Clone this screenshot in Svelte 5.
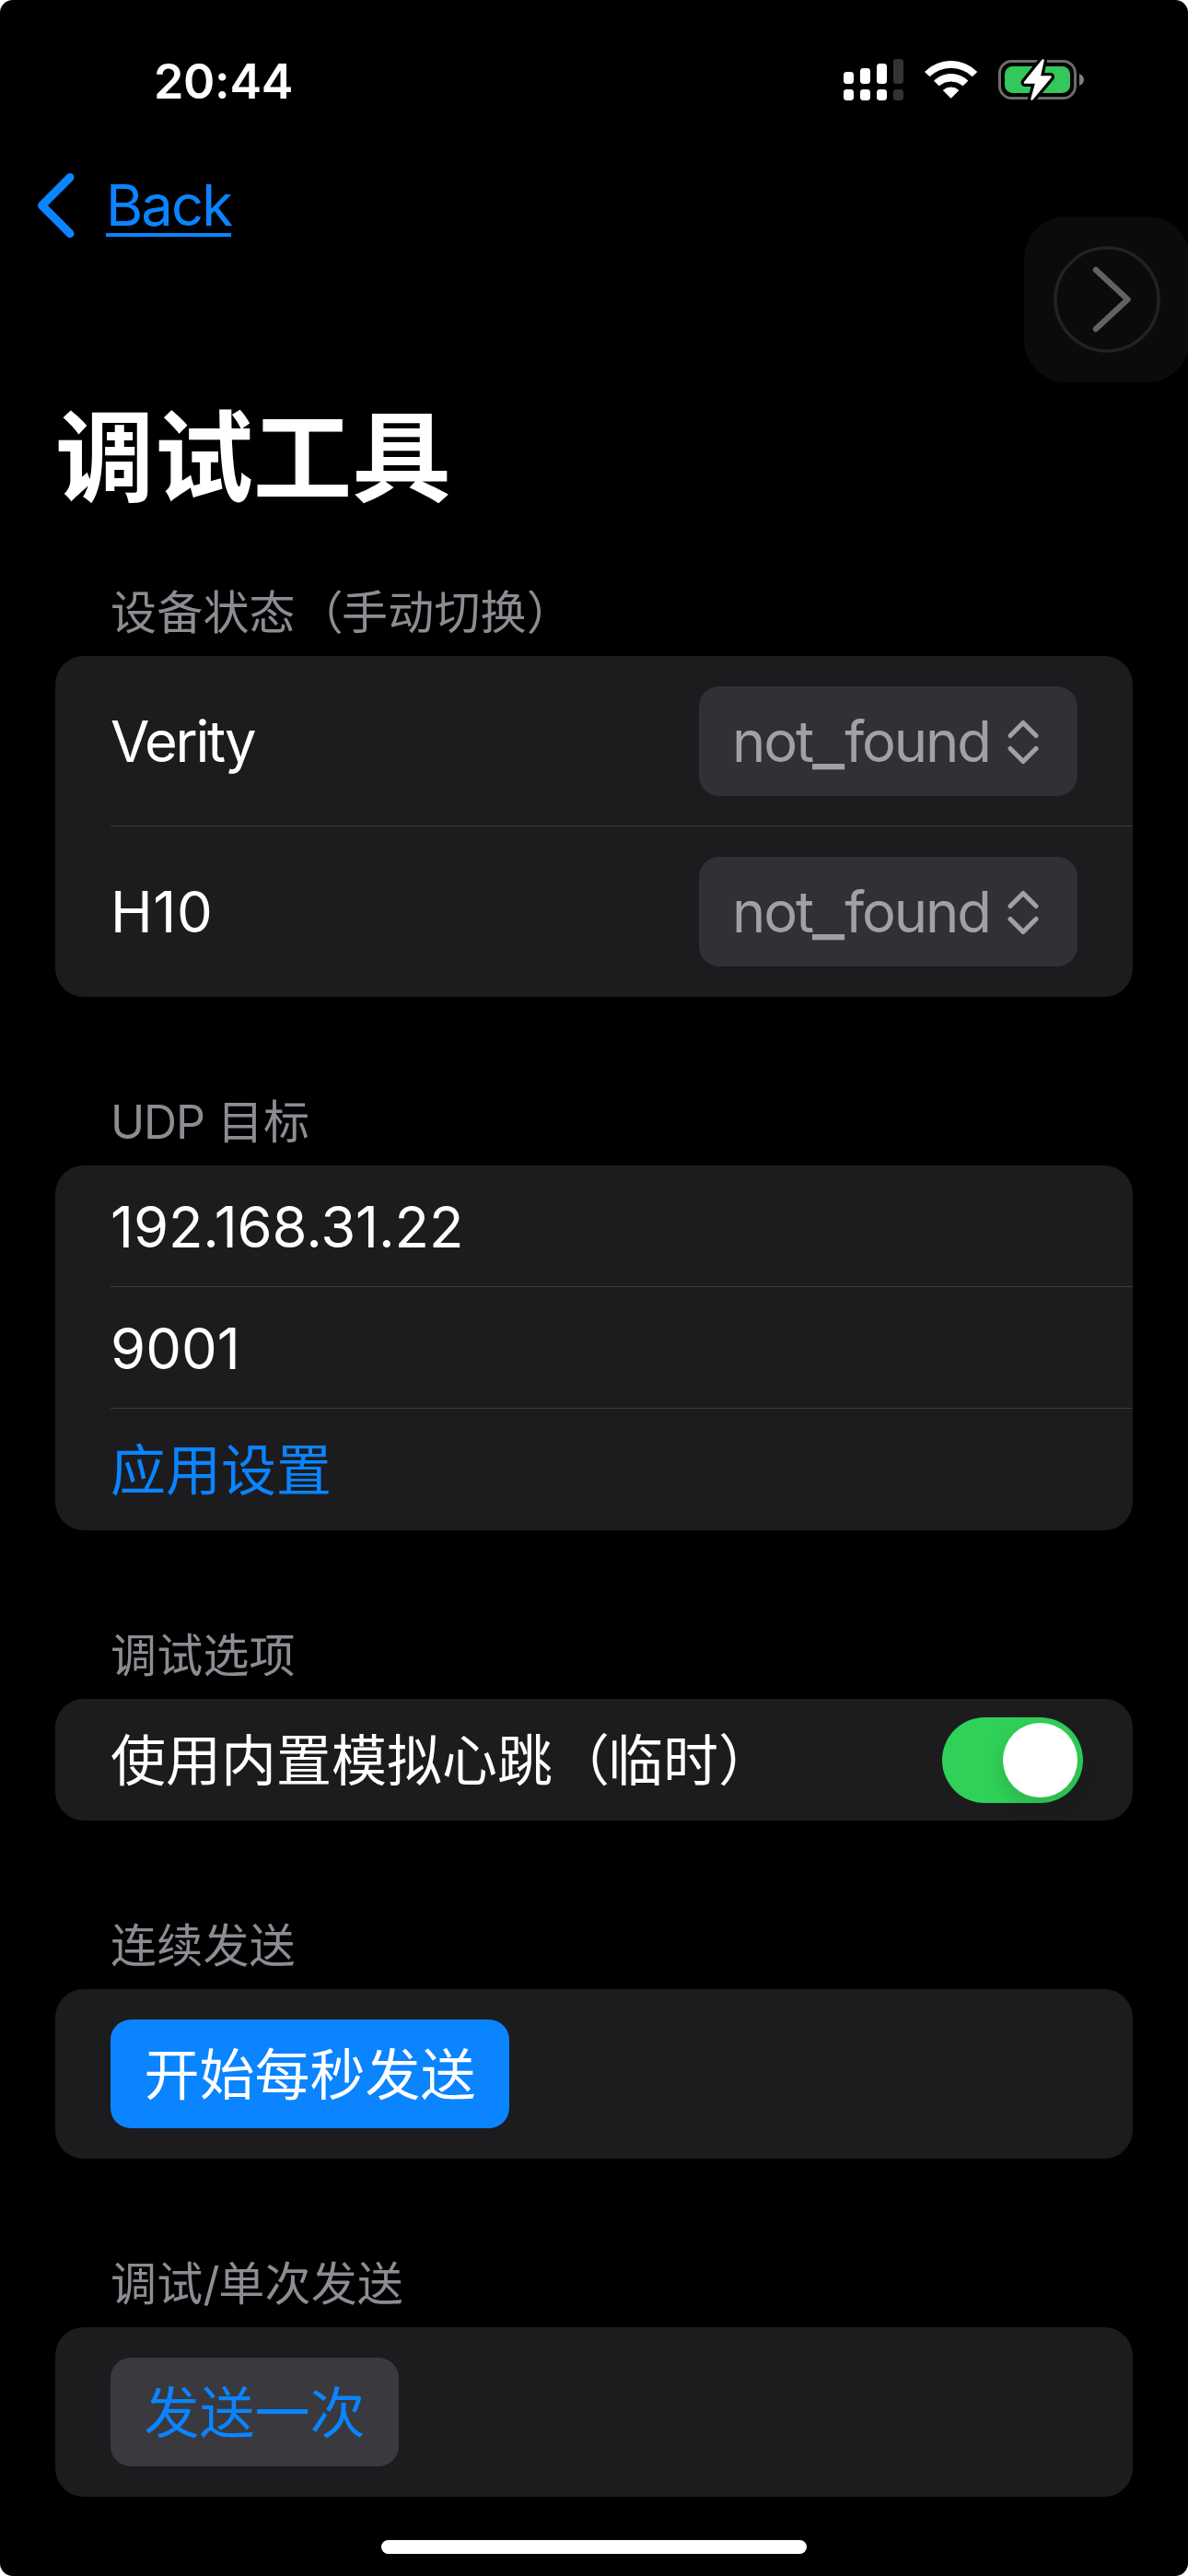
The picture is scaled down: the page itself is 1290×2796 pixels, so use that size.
<script>
  const devices = [
    { name: 'Verity', tight: true },
    { name: 'H10', tight: false }
  ];
  let simulate = $state(true);
</script>

<div class="screen">
  <div class="status">
    <span class="time">20:44</span>
    <svg class="status-icons" width="262" height="46" viewBox="916 64 262 46">
      <g fill="#fff">
        <rect x="916" y="78" width="11" height="13" rx="3.4" />
        <rect x="934" y="74" width="11" height="17" rx="3.4" />
        <rect x="952" y="69" width="11" height="22" rx="3.4" />
        <rect x="916" y="97" width="11" height="12" rx="3.4" />
        <rect x="934" y="97" width="11" height="12" rx="3.4" />
        <rect x="952" y="97" width="11" height="12" rx="3.4" />
      </g>
      <g fill="#333">
        <rect x="970" y="64" width="11" height="27" rx="3.4" />
        <rect x="970" y="97" width="11" height="12" rx="3.4" />
      </g>
      <g fill="#fff" stroke="#fff" stroke-width="1" stroke-linejoin="round">
        <path d="M1004.5 78A40 40 0 0 1 1060.7 78L1055.7 82.7A33.3 33.3 0 0 0 1009.5 82.7Z" />
        <path d="M1014.5 87.7A26.5 26.5 0 0 1 1050.8 87.7L1045.6 92.8A20 20 0 0 0 1019.6 92.8Z" />
        <path d="M1024.4 98A12.5 12.5 0 0 1 1040.8 98L1032.6 106.3Z" />
      </g>
      <rect x="1085.5" y="66.5" width="82" height="40" rx="13" fill="none" stroke="#6c6c6c" stroke-width="3" />
      <path d="M1172 80Q1177 82 1177 86.5Q1177 91 1172 93Z" fill="#7c7c7c" />
      <rect x="1091" y="72" width="71" height="29" rx="8.5" fill="#34c759" />
      <path d="M1132.5 65.5L1113 89.5H1125.5L1120.5 107.5L1140.5 83.5H1128.5Z" fill="#fff" stroke="#000" stroke-width="9" stroke-linejoin="round" />
      <path d="M1132.5 65.5L1113 89.5H1125.5L1120.5 107.5L1140.5 83.5H1128.5Z" fill="#fff" stroke="#fff" stroke-width="2.6" stroke-linejoin="round" />
    </svg>
  </div>

  <nav class="nav">
    <svg width="42" height="72" viewBox="0 0 42 72">
      <path d="M36 5.5L5.5 36L36 66.5" fill="none" stroke="#0a84ff" stroke-width="9" stroke-linecap="round" stroke-linejoin="round" />
    </svg>
    <span class="back">Back</span>
  </nav>

  <div class="assist">
    <svg width="180" height="180" viewBox="0 0 180 180">
      <circle cx="90" cy="90" r="56" fill="none" stroke="#222" stroke-width="3.6" />
      <path d="M78 58L112.5 90L78 122" fill="none" stroke="#626262" stroke-width="6.4" stroke-linecap="round" stroke-linejoin="round" />
    </svg>
  </div>

  <h1>调试工具</h1>

  <h2 class="first">设备状态<span class="paren">（</span>手动切换）</h2>
  <section class="card">
    {#each devices as device}
      <div class="row tall">
        <span class={device.tight ? 'tight' : 'loose'}>{device.name}</span>
        <button class="picker">
          <span class="value">not<span class="underscore">_</span>found</span>
          <svg width="34" height="48" viewBox="0 0 34 48">
            <path d="M3 17.5L17 3.5L31 17.5M3 31.5L17 45.5L31 31.5" fill="none" stroke="#a0a0a8" stroke-width="5" stroke-linecap="round" stroke-linejoin="round" />
          </svg>
        </button>
      </div>
    {/each}
  </section>

  <h2><span class="latin">UDP</span> 目标</h2>
  <section class="card">
    <div class="row"><span class="ip">192.168.31.22</span></div>
    <div class="row"><span>9001</span></div>
    <div class="row zh link">应用设置</div>
  </section>

  <h2>调试选项</h2>
  <section class="card">
    <div class="row zh">
      <span>使用内置模拟心跳<span class="paren">（</span>临时）</span>
      <button class="switch" class:on={simulate} aria-label="使用内置模拟心跳" onclick={() => (simulate = !simulate)}>
        <span class="thumb"></span>
      </button>
    </div>
  </section>

  <h2>连续发送</h2>
  <section class="card">
    <div class="row action zh"><button class="btn primary">开始每秒发送</button></div>
  </section>

  <h2>调试<span class="latin">/</span>单次发送</h2>
  <section class="card">
    <div class="row action zh"><button class="btn">发送一次</button></div>
  </section>

  <div class="home"></div>
</div>

<style>
  :global(body) {
    background: #fff;
  }
  .screen {
    position: relative;
    box-sizing: border-box;
    width: 1290px;
    height: 2796px;
    overflow: hidden;
    background: #000;
    border-radius: 14px;
    color: #fff;
    font-family: Inter, "Noto Sans CJK SC", sans-serif;
    display: flex;
    flex-direction: column;
  }
  button {
    border: 0;
    padding: 0;
    margin: 0;
    font: inherit;
    color: inherit;
  }
  svg {
    display: block;
    flex: none;
  }
  .status {
    height: 174px;
    box-sizing: border-box;
    padding: 64px 112px 0 167px;
    display: flex;
    justify-content: space-between;
    align-items: flex-start;
  }
  .time {
    font-size: 52px;
    font-weight: 600;
    line-height: 49px;
    letter-spacing: -0.3px;
  }
  .nav {
    height: 98px;
    padding-left: 40px;
    display: flex;
    align-items: center;
  }
  .back {
    margin-left: 33px;
    height: 68px;
    box-sizing: border-box;
    font-size: 61.5px;
    line-height: 68px;
    color: #0a84ff;
    letter-spacing: -1.9px;
    border-bottom: 4px solid #0a84ff;
  }
  .assist {
    position: absolute;
    left: 1112px;
    top: 235px;
    width: 180px;
    height: 180px;
    border-radius: 46px;
    background: #0b0b0b;
  }
  h1 {
    margin: 150px 0 0 60px;
    font-size: 107.4px;
    font-weight: 700;
    line-height: 150px;
  }
  h2 {
    margin: 0;
    box-sizing: border-box;
    height: 183px;
    padding: 100px 0 0 120px;
    font-size: 50px;
    font-weight: 400;
    line-height: 72px;
    letter-spacing: 0.2px;
    color: #8d8c93;
    white-space: nowrap;
  }
  h2.first {
    height: 140px;
    padding-top: 57px;
  }
  .latin {
    letter-spacing: -1.2px;
  }
  .paren {
    margin: 0 -2px 0 2px;
  }
  .card {
    margin: 0 60px;
    border-radius: 31px;
    background: #1c1c1e;
  }
  .row {
    position: relative;
    box-sizing: border-box;
    height: 132px;
    padding: 0 60px;
    display: flex;
    align-items: center;
    justify-content: space-between;
    font-size: 61.5px;
    white-space: nowrap;
  }
  .row:not(:last-child)::after {
    content: "";
    position: absolute;
    left: 60px;
    right: 0;
    bottom: 0;
    height: 1px;
    background: #3c3c3f;
  }
  .row.tall {
    height: 185px;
  }
  .row.action {
    height: 184px;
  }
  .row.zh {
    font-size: 60px;
  }
  .row.zh > span,
  .btn {
    padding-bottom: 8px;
  }
  .row.link {
    padding-bottom: 8px;
    color: #0a84ff;
  }
  .tight {
    letter-spacing: -2.3px;
  }
  .loose {
    letter-spacing: 0.6px;
  }
  .ip {
    letter-spacing: -0.1px;
  }
  .picker {
    width: 411px;
    height: 119px;
    padding: 0 42px 0 36px;
    box-sizing: border-box;
    display: flex;
    align-items: center;
    justify-content: space-between;
    border-radius: 22px;
    background: #313035;
    color: #a0a0a8;
  }
  .value {
    letter-spacing: -2.1px;
  }
  .underscore {
    font-size: 77px;
    line-height: 0;
    letter-spacing: 0;
    vertical-align: -2px;
  }
  .switch {
    width: 153px;
    height: 93px;
    margin-right: -6px;
    padding: 6px;
    display: flex;
    border-radius: 47px;
    background: #39393d;
  }
  .switch.on {
    justify-content: flex-end;
    background: #30d158;
  }
  .thumb {
    width: 81px;
    height: 81px;
    border-radius: 50%;
    background: #fff;
    box-shadow: 0 9px 24px rgba(0, 0, 0, 0.15);
  }
  .btn {
    box-sizing: border-box;
    height: 118px;
    padding-left: 36.5px;
    padding-right: 36.5px;
    border-radius: 22px;
    background: #3a393e;
    color: #0a84ff;
  }
  .btn.primary {
    background: #0a84ff;
    color: #fff;
  }
  .home {
    width: 462px;
    height: 15px;
    margin: 47px auto 0;
    border-radius: 8px;
    background: #fff;
  }
</style>
